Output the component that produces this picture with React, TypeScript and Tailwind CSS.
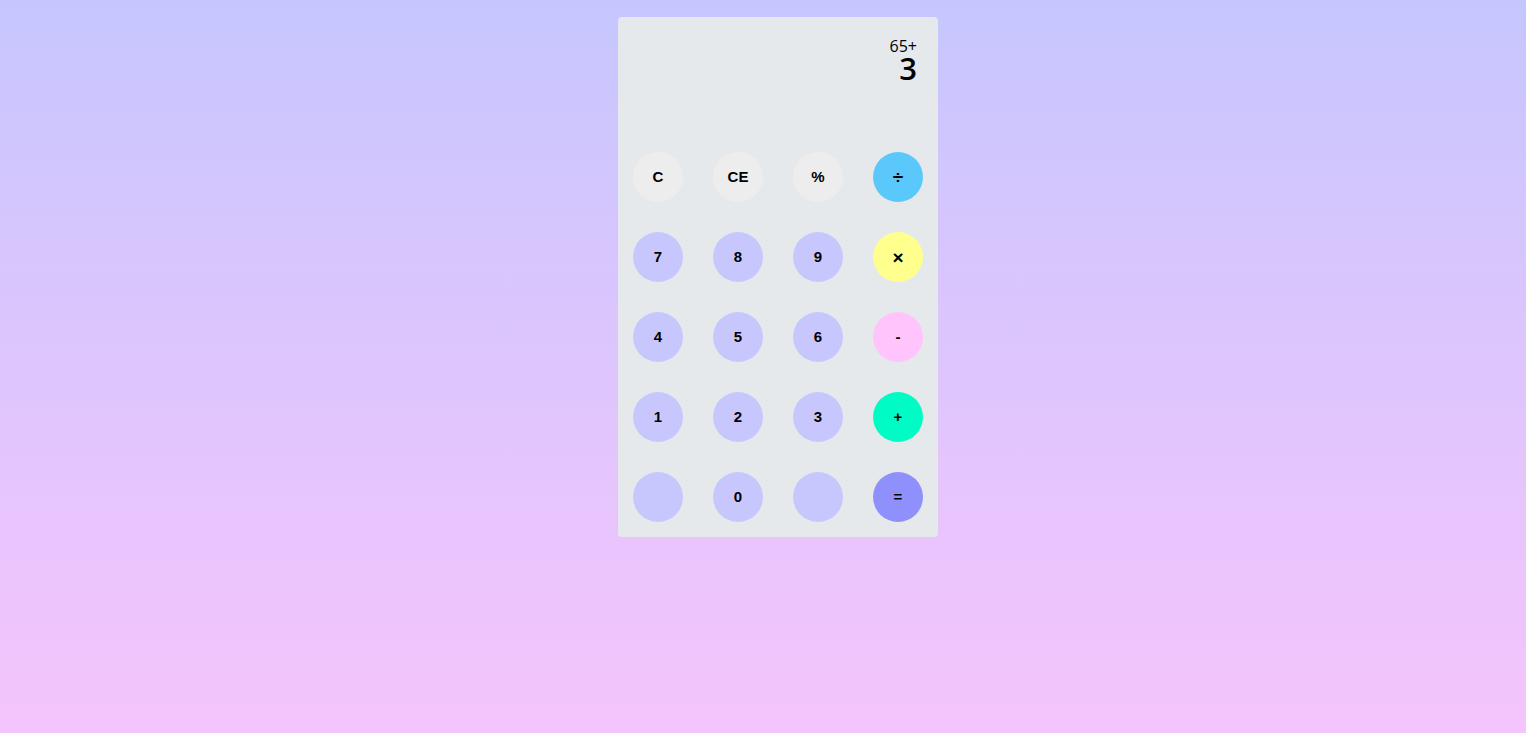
import React from "react";

type Key = { label: string; bg: string };

const KEYS: Key[] = [
  { label: "C", bg: "bg-[#ededed]" },
  { label: "CE", bg: "bg-[#ededed]" },
  { label: "%", bg: "bg-[#ededed]" },
  { label: "÷", bg: "bg-[#5ac8fa]" },
  { label: "7", bg: "bg-[#c7c7fe]" },
  { label: "8", bg: "bg-[#c7c7fe]" },
  { label: "9", bg: "bg-[#c7c7fe]" },
  { label: "×", bg: "bg-[#ffff8d]" },
  { label: "4", bg: "bg-[#c7c7fe]" },
  { label: "5", bg: "bg-[#c7c7fe]" },
  { label: "6", bg: "bg-[#c7c7fe]" },
  { label: "-", bg: "bg-[#ffc4fc]" },
  { label: "1", bg: "bg-[#c7c7fe]" },
  { label: "2", bg: "bg-[#c7c7fe]" },
  { label: "3", bg: "bg-[#c7c7fe]" },
  { label: "+", bg: "bg-[#00fcc4]" },
  { label: "", bg: "bg-[#c7c7fe]" },
  { label: "0", bg: "bg-[#c7c7fe]" },
  { label: "", bg: "bg-[#c7c7fe]" },
  { label: "=", bg: "bg-[#8f90fb]" },
];

export default function App() {
  return (
    <div className="min-h-screen w-full bg-gradient-to-b from-[#c6c6fe] to-[#f5c4fc] flex justify-center pt-[17px] pl-[30px]">
      <div className="w-[320px] h-[520px] bg-[#e5e9ec] rounded-[4px] p-[15px] flex flex-col">
        <div className="h-[90px] flex flex-col items-end pr-[6px] pt-[5px] font-['Open_Sans',sans-serif] text-black">
          <div className="text-[16px] leading-[18px] font-medium">65+</div>
          <div className="text-[31px] leading-[26px] font-semibold">3</div>
        </div>
        <div className="mt-[30px] grid grid-cols-4 gap-x-[30px] gap-y-[30px]">
          {KEYS.map((k, i) => (
            <button
              key={i}
              className={`w-[50px] h-[50px] rounded-full ${k.bg} flex items-center justify-center pt-[1px] font-['Liberation_Sans',Arial,sans-serif] font-bold text-[15px] text-black`}
            >
              <span className={k.label === "÷" || k.label === "×" ? "text-[19px] leading-none" : ""}>{k.label}</span>
            </button>
          ))}
        </div>
      </div>
    </div>
  );
}
